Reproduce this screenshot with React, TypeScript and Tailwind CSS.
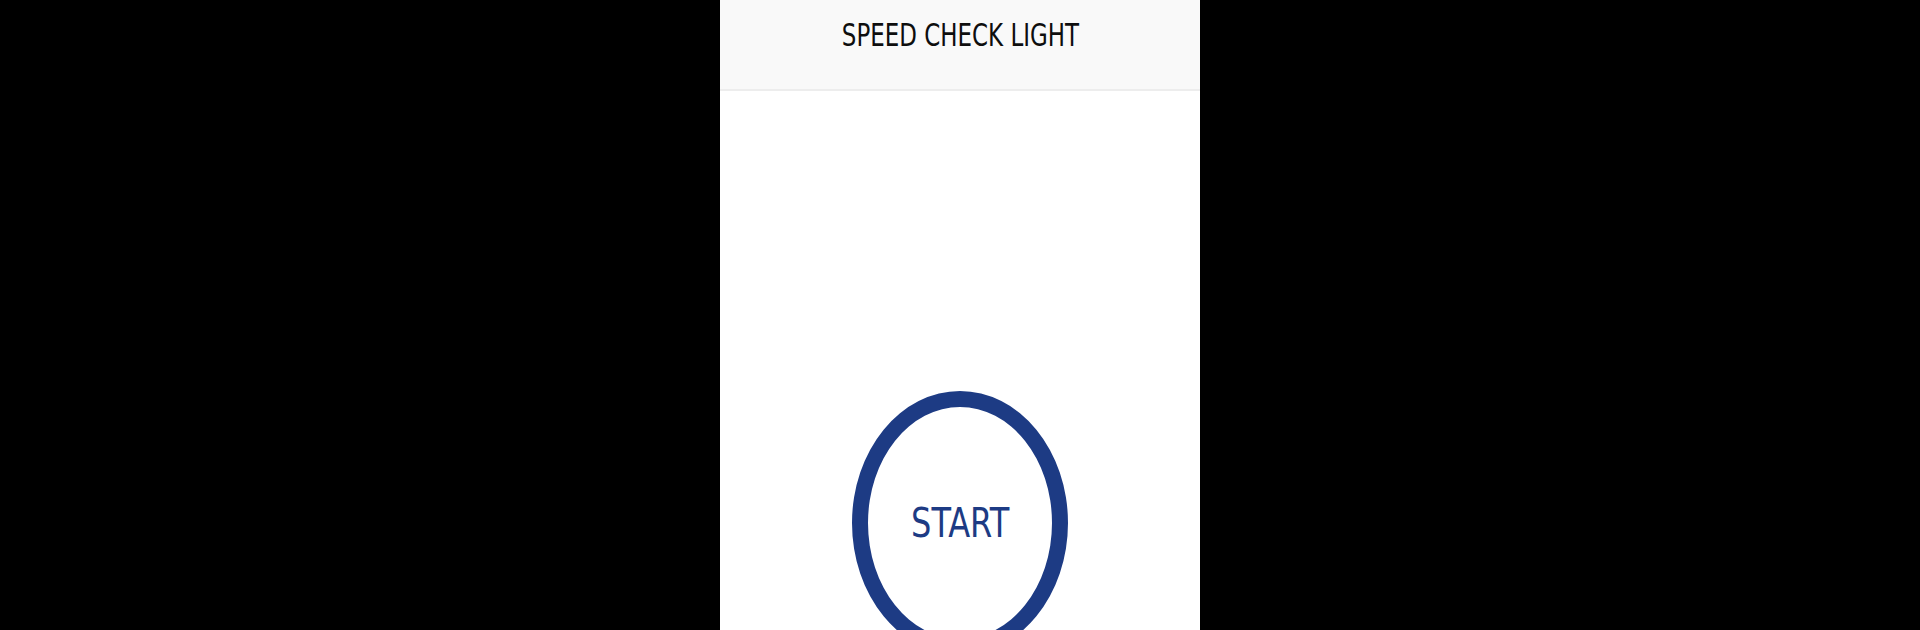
export default function App() {
  return (
    <div className="w-[1920px] h-[630px] bg-black flex justify-center overflow-hidden">
      <div className="w-[480px] h-[630px] bg-white flex flex-col overflow-hidden">
        <div className="h-[91px] shrink-0 bg-[#f9f9f9] border-b-2 border-[#ededed] flex justify-center pt-[17px]">
          <div
            className="text-[31.5px] leading-[36px] text-[#0e0e0e] scale-x-[0.81] whitespace-nowrap"
            style={{ fontFamily: '"DejaVu Sans Condensed", "DejaVu Sans", sans-serif', fontStretch: 'condensed' }}
          >
            SPEED CHECK LIGHT
          </div>
        </div>
        <div className="flex justify-center pt-[300px]">
          <div className="w-[216px] h-[264px] shrink-0 rounded-[50%] border-[16px] border-[#1d3b84] flex items-center justify-center">
            <span
              className="text-[40px] leading-[46px] text-[#1d3b84] scale-x-[0.89] whitespace-nowrap"
              style={{ fontFamily: '"DejaVu Sans Condensed", "DejaVu Sans", sans-serif', fontStretch: 'condensed' }}
            >
              START
            </span>
          </div>
        </div>
      </div>
    </div>
  );
}
